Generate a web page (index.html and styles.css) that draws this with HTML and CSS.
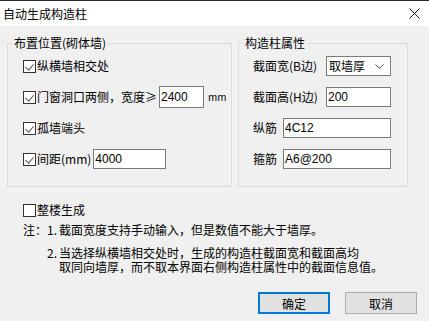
FILE: index.html
```html
<!DOCTYPE html>
<html lang="zh-CN">
<head>
    <meta charset="UTF-8">
    <title>自动生成构造柱</title>
    <link rel="stylesheet" href="styles.css">
</head>
<body>
<div class="topline"></div>
<div class="titlebar">
    <span class="title">自动生成构造柱</span>
    <svg class="close" width="11" height="11" viewBox="0 0 11 11">
        <path d="M0.5 0.5 L10.5 10.5 M10.5 0.5 L0.5 10.5" stroke="#111" stroke-width="1" fill="none"/>
    </svg>
</div>

<div class="dialog">
    <div class="groups">
        <fieldset class="group g1">
            <legend>布置位置(砌体墙)</legend>
            <div class="rows">
                <div class="row">
                    <span class="cb on"></span><span>纵横墙相交处</span>
                </div>
                <div class="row">
                    <span class="cb on"></span><span>门窗洞口两侧，宽度≥</span>
                    <input type="text" class="txt w45" value="2400">
                    <span class="unit">mm</span>
                </div>
                <div class="row">
                    <span class="cb on"></span><span>孤墙端头</span>
                </div>
                <div class="row">
                    <span class="cb on"></span><span>间距(mm)</span>
                    <input type="text" class="txt w73 short" value="4000">
                </div>
            </div>
        </fieldset>

        <fieldset class="group g2">
            <legend>构造柱属性</legend>
            <div class="rows">
                <div class="row">
                    <span class="lbl">截面宽(B边)</span>
                    <div class="combo">
                        <span>取墙厚</span>
                        <svg width="9" height="5" viewBox="0 0 9 5"><path d="M0.5 0.5 L4.5 4.5 L8.5 0.5" stroke="#444" fill="none"/></svg>
                    </div>
                </div>
                <div class="row">
                    <span class="lbl">截面高(H边)</span>
                    <input type="text" class="txt w65" value="200">
                </div>
                <div class="row">
                    <span class="lbl short">纵筋</span>
                    <input type="text" class="txt w108" value="4C12">
                </div>
                <div class="row">
                    <span class="lbl short">箍筋</span>
                    <input type="text" class="txt w108" value="A6@200">
                </div>
            </div>
        </fieldset>
    </div>

    <div class="row whole">
        <span class="cb"></span><span>整楼生成</span>
    </div>

    <div class="notes">
        <span>注：</span><span>1.</span><span>截面宽度支持手动输入，但是数值不能大于墙厚。</span>
        <span></span><span class="gap">2.</span>
        <div class="gap">
            <div>当选择纵横墙相交处时，生成的构造柱截面宽和截面高均</div>
            <div>取同向墙厚，而不取本界面右侧构造柱属性中的截面信息值。</div>
        </div>
    </div>

    <div class="buttons">
        <button class="btn default">确定</button>
        <button class="btn">取消</button>
    </div>
</div>
</body>
</html>
```

FILE: styles.css
```css
*{
    margin: 0;
    padding: 0;
    box-sizing: border-box;
}
body{
    width: 429px;
    height: 321px;
    overflow: hidden;
    background-color: #f0f0f0;
    font-family: "Noto Sans CJK SC", "Liberation Sans", sans-serif;
    font-size: 12px;
    color: #000;
}
.topline{
    height: 1px;
    background-color: #2b2b2b;
}
.titlebar{
    height: 25px;
    background-color: #fff;
    display: flex;
    align-items: center;
    justify-content: space-between;
    padding: 0 9px 0 3px;
}
.title{
    font-size: 12px;
    line-height: 16px;
}
.dialog{
    padding: 9px 0 0 7px;
}
.groups{
    display: flex;
    gap: 6px;
}
.group{
    border: 1px solid #dcdcdc;
    height: 152px;
    padding: 0;
    margin: 0;
}
.group legend{
    margin-left: 4px;
    padding: 0 2px;
    line-height: 16px;
}
.g1{
    width: 225px;
}
.g2{
    width: 170px;
}
.rows{
    display: flex;
    flex-direction: column;
    gap: 9px;
    padding-top: 4px;
}
.g1 .rows{
    padding-left: 15px;
}
.g2 .rows{
    padding-left: 14px;
}
.row{
    display: flex;
    align-items: center;
    height: 22px;
    line-height: 16px;
}
.cb{
    width: 13px;
    height: 13px;
    border: 1px solid #333;
    background-color: #fff;
    margin-right: 1px;
    flex: none;
    position: relative;
}
.cb.on::after{
    content: "";
    position: absolute;
    left: 3px;
    top: 1px;
    width: 4px;
    height: 7px;
    border-right: 1px solid #555;
    border-bottom: 1px solid #555;
    transform: rotate(40deg);
}
.txt{
    height: 22px;
    border: 1px solid #7a7a7a;
    background-color: #fff;
    font-family: "Liberation Sans", sans-serif;
    font-size: 12px;
    padding: 0 1px;
    color: #000;
    outline: none;
}
.txt.short{
    height: 20px;
}
.w45{
    width: 45px;
    margin-left: 2px;
}
.w73{
    width: 73px;
    margin-left: 2px;
}
.g2 .txt{
    height: 20px;
}
.w65{
    width: 65px;
}
.w108{
    width: 108px;
}
.unit{
    font-size: 10px;
    margin-left: 4px;
}
.lbl{
    width: 73px;
}
.lbl.short{
    width: 30px;
}
.combo{
    width: 65px;
    height: 20px;
    border: 1px solid #7a7a7a;
    background-color: #fff;
    display: flex;
    align-items: center;
    justify-content: space-between;
    padding: 0 6px 0 2px;
}
.whole{
    margin: 12px 0 0 16px;
}
.notes{
    display: grid;
    grid-template-columns: 24px 12px auto;
    margin: 2px 0 0 16px;
    line-height: 14px;
}
.notes .gap{
    margin-top: 9px;
}
.buttons{
    display: flex;
    justify-content: flex-end;
    gap: 15px;
    padding-right: 12px;
    margin-top: 18px;
}
.btn{
    width: 72px;
    height: 22px;
    background-color: #e1e1e1;
    border: 1px solid #adadad;
    font-family: "Noto Sans CJK SC", sans-serif;
    font-size: 12px;
    color: #000;
}
.btn.default{
    border: 2px solid #0078d7;
}
```
